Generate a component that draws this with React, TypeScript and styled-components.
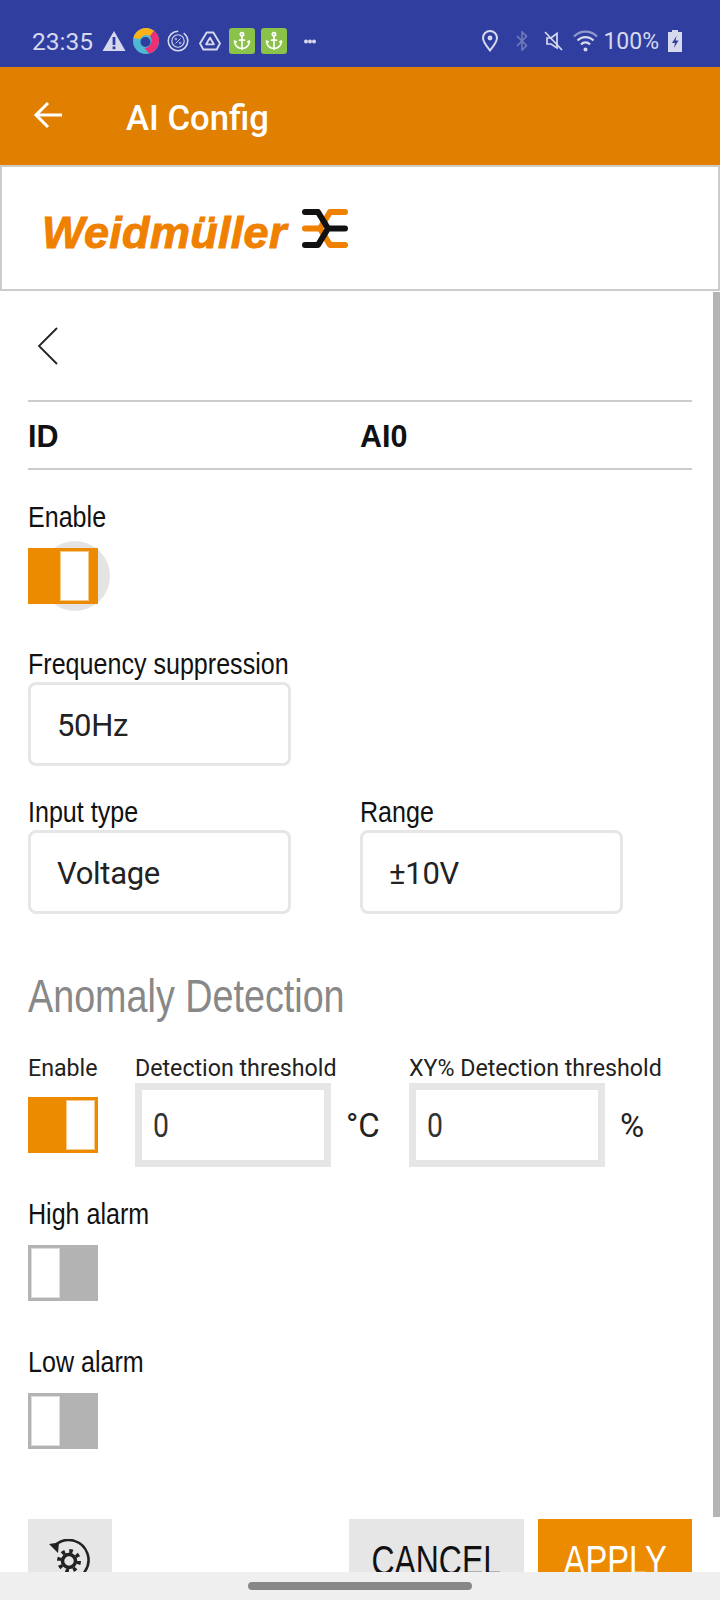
import styled, { createGlobalStyle } from 'styled-components';
import { Anchor, Bluetooth } from 'lucide-react';

const GlobalStyle = createGlobalStyle`
    html, body {
        margin: 0;
        padding: 0;
        background: #fff;
    }
    * {
        box-sizing: border-box;
    }
`

const WarningIcon = () => (
    <svg width="24" height="22" viewBox="0 0 24 22">
        <path d="M12 1 L23.5 21 H.5 Z" fill="#d6d9ee" />
        <rect x="10.6" y="7" width="2.8" height="8" fill="#303f9f" />
        <rect x="10.6" y="16.4" width="2.8" height="2.8" fill="#303f9f" />
    </svg>
)

const BallIcon = () => (
    <svg width="26" height="26" viewBox="0 0 26 26">
        <circle cx="13" cy="13" r="13" fill="#4db9d4" />
        <path d="M.4 10 A13 13 0 0 1 21 2.8 L17 8 A7 7 0 0 0 7 11 Z" fill="#fbb117" />
        <path d="M21 2.8 A13 13 0 0 1 16 25.6 L11.5 20 A7.5 7.5 0 0 0 17 8 Z" fill="#ee2f74" />
        <circle cx="12.5" cy="14" r="5" fill="#303f9f" />
    </svg>
)

const PercentIcon = () => (
    <svg width="22" height="22" viewBox="0 0 23 23" fill="none" stroke="#d6d9ee">
        <circle cx="11.5" cy="11.5" r="10.2" strokeWidth="1.6" strokeDasharray="48 6" />
        <circle cx="11.5" cy="11.5" r="6.5" strokeWidth="1.2" />
        <path d="M9 14 L14 9" strokeWidth="1" />
        <circle cx="9.2" cy="9.4" r=".9" strokeWidth=".8" />
        <circle cx="13.8" cy="13.6" r=".9" strokeWidth=".8" />
    </svg>
)

const DriveIcon = () => (
    <svg width="22" height="20" viewBox="0 0 23 21" fill="none" stroke="#d6d9ee" strokeWidth="2" strokeLinejoin="round">
        <path d="M8 1.5 H15 L22 13 L18.5 19.5 H4.5 L1 13 Z" />
        <path d="M11.5 7 L15.5 14 H7.5 Z" />
    </svg>
)

const DotsIcon = () => (
    <svg width="12" height="5" viewBox="0 0 12 5" fill="#d6d9ee">
        <circle cx="2" cy="2.5" r="2" />
        <circle cx="6" cy="2.5" r="2" />
        <circle cx="10" cy="2.5" r="2" />
    </svg>
)

const PinIcon = () => (
    <svg width="16" height="22" viewBox="0 0 16 22" fill="none" stroke="#d6d9ee" strokeWidth="2">
        <path d="M8 20.5 C4 15.5 1 12 1 8 A7 7 0 0 1 15 8 C15 12 12 15.5 8 20.5 Z" />
        <circle cx="8" cy="8" r="2.4" fill="#d6d9ee" stroke="none" />
    </svg>
)

const MuteIcon = () => (
    <svg width="19" height="20" viewBox="0 0 19 20" fill="none" stroke="#d6d9ee" strokeWidth="1.7">
        <path d="M3 7 H7 L13 2.5 V17 L7 13 H3 Z" />
        <path d="M1 1 L18 19" />
    </svg>
)

const WifiIcon = () => (
    <svg width="25" height="22" viewBox="0 0 25 22" fill="none" strokeWidth="2.2">
        <path d="M1 6.5 A16 16 0 0 1 24 6.5" stroke="#8f98cf" />
        <path d="M4.5 10.5 A11 11 0 0 1 20.5 10.5" stroke="#d6d9ee" />
        <path d="M8 14.5 A6 6 0 0 1 17 14.5" stroke="#d6d9ee" />
        <circle cx="12.5" cy="19.5" r="2" fill="#d6d9ee" stroke="none" />
    </svg>
)

const BatteryIcon = () => (
    <svg width="14" height="22" viewBox="0 0 14 22">
        <path d="M4 0 H10 V2 H14 V22 H0 V2 H4 Z" fill="#d6d9ee" />
        <path d="M8.5 6 L4 13 H7 L6 18 L10.5 10.5 H7.5 Z" fill="#303f9f" />
    </svg>
)

const BackArrow = () => (
    <ArrowSvg width="30" height="28" viewBox="0 0 30 28" fill="none" stroke="#fff" strokeWidth="3">
        <path d="M29 14 H3" />
        <path d="M15 2 L3 14 L15 26" />
    </ArrowSvg>
)

const AppLogo = () => (
    <LogoMark width="46" height="42" viewBox="0 0 46 42" fill="none" strokeWidth="6" strokeLinecap="round" strokeLinejoin="round">
        <path d="M43 4 H28 L18 20.5 H3 M18 20.5 L28 37 H43" stroke="#f08000" />
        <path d="M3 4 H16 L26 20.5 H43 M26 20.5 L16 37 H3" stroke="#111" />
    </LogoMark>
)

const ResetIcon = () => (
    <svg width="44" height="44" viewBox="0 0 44 44" fill="none" stroke="#222" strokeWidth="2.6">
        <path d="M8.5 5 A20 20 0 1 1 21 41" />
        <path d="M1 5 L11 3.5 L10 14 Z" fill="#222" stroke="none" />
        <circle cx="21" cy="22" r="6.5" strokeWidth="3.5" />
        <circle cx="21" cy="22" r="10" strokeWidth="4" strokeDasharray="3.5 4.35" />
    </svg>
)

const App = () => {
    return (
        <Screen>
            <GlobalStyle />
            <StatusBar>
                <StatusGroup>
                    <Clock>23:35</Clock>
                    <Slot $gap={9}><WarningIcon /></Slot>
                    <Slot $gap={7}><BallIcon /></Slot>
                    <Slot $gap={8}><PercentIcon /></Slot>
                    <Slot $gap={10}><DriveIcon /></Slot>
                    <AnchorTile $gap={8}><Anchor size={20} color="#fff" strokeWidth={2} /></AnchorTile>
                    <AnchorTile $gap={6}><Anchor size={20} color="#fff" strokeWidth={2} /></AnchorTile>
                    <Slot $gap={17}><DotsIcon /></Slot>
                </StatusGroup>
                <StatusGroup>
                    <Slot $gap={0}><PinIcon /></Slot>
                    <Slot $gap={13}><Bluetooth size={22} color="#6d78bb" strokeWidth={1.8} /></Slot>
                    <Slot $gap={11}><MuteIcon /></Slot>
                    <Slot $gap={10}><WifiIcon /></Slot>
                    <Battery>100%</Battery>
                    <Slot $gap={9}><BatteryIcon /></Slot>
                </StatusGroup>
            </StatusBar>

            <AppBar>
                <BackArrow />
                <AppTitle>AI Config</AppTitle>
            </AppBar>

            <LogoBox>
                <LogoText>Weidmüller</LogoText>
                <AppLogo />
            </LogoBox>

            <Content>
                <BackRow>
                    <svg width="24" height="40" viewBox="0 0 24 40" fill="none" stroke="#222" strokeWidth="1.8">
                        <path d="M21 2 L3 20 L21 38" />
                    </svg>
                </BackRow>
                <IdRow>
                    <IdCell>ID</IdCell>
                    <IdCell>AI0</IdCell>
                </IdRow>

                <EnableLabel>Enable</EnableLabel>
                <Toggle $on $focus><Thumb $on /></Toggle>

                <Label>Frequency suppression</Label>
                <Select>50Hz</Select>

                <SelectRow>
                    <div>
                        <SelectRowLabel>Input type</SelectRowLabel>
                        <Select>Voltage</Select>
                    </div>
                    <div>
                        <SelectRowLabel>Range</SelectRowLabel>
                        <Select>±10V</Select>
                    </div>
                </SelectRow>

                <SectionTitle>Anomaly Detection</SectionTitle>

                <AnomalyRow>
                    <div>
                        <SmallLabel>Enable</SmallLabel>
                        <AnomalyToggle $on><Thumb $on /></AnomalyToggle>
                    </div>
                    <ThresholdCell>
                        <SmallLabel>Detection threshold</SmallLabel>
                        <ThresholdLine>
                            <NumberBox><NumberText>0</NumberText></NumberBox>
                            <Unit>°C</Unit>
                        </ThresholdLine>
                    </ThresholdCell>
                    <ThresholdCell>
                        <SmallLabel>XY% Detection threshold</SmallLabel>
                        <ThresholdLine>
                            <NumberBox><NumberText>0</NumberText></NumberBox>
                            <Unit>%</Unit>
                        </ThresholdLine>
                    </ThresholdCell>
                </AnomalyRow>

                <EnableLabel>High alarm</EnableLabel>
                <Toggle><Thumb /></Toggle>

                <LowLabel>Low alarm</LowLabel>
                <Toggle><Thumb /></Toggle>

                <ActionRow>
                    <ResetButton><ResetIcon /></ResetButton>
                    <ActionRight>
                        <ActionButton><ActionText>CANCEL</ActionText></ActionButton>
                        <ActionButton $primary><ActionText $primary>APPLY</ActionText></ActionButton>
                    </ActionRight>
                </ActionRow>

                <ScrollThumb />
            </Content>

            <NavBar><NavPill /></NavBar>
        </Screen>
    );
};

export default App;

const Screen = styled.div`
    isolation: isolate;
    width: 720px;
    height: 1600px;
    display: flex;
    flex-direction: column;
    overflow: hidden;
    background: #fff;
    font-family: Roboto, "Liberation Sans", sans-serif;
`

const StatusBar = styled.div`
    flex: none;
    height: 67px;
    background: #303f9f;
    display: flex;
    align-items: center;
    justify-content: space-between;
    padding: 15px 38px 0 32px;
    color: #d6d9ee;
`

const StatusGroup = styled.div`
    display: flex;
    align-items: center;
`

const Slot = styled.div<{ $gap: number }>`
    display: flex;
    margin-left: ${p => p.$gap}px;
`

const Clock = styled.span`
    font-size: 24.5px;
`

const Battery = styled.span`
    font-size: 23px;
    margin-left: 5px;
`

const AnchorTile = styled(Slot)`
    width: 26px;
    height: 26px;
    border-radius: 3px;
    background: #8bc34a;
    align-items: center;
    justify-content: center;
`

const AppBar = styled.div`
    flex: none;
    height: 98px;
    background: #e18000;
    display: flex;
    align-items: center;
    padding: 0 0 0 33px;
    gap: 63px;
`

const ArrowSvg = styled.svg`
    margin-bottom: 3px;
`

const AppTitle = styled.div`
    color: #fff;
    font-size: 34.7px;
    font-weight: 500;
    margin-top: 3px;
`

const LogoBox = styled.div`
    flex: none;
    height: 126px;
    border: 2px solid #ccc;
    display: flex;
    align-items: flex-start;
    padding: 41px 0 0 40px;
    gap: 15px;
    background: #fff;
`

const LogoText = styled.div`
    color: #f08000;
    font-family: "Liberation Sans", Arial, sans-serif;
    font-style: italic;
    font-weight: 700;
    font-size: 45px;
    line-height: 50px;
    letter-spacing: .3px;
    -webkit-text-stroke: 1px #f08000;
`

const LogoMark = styled.svg`
    flex: none;
`

const Content = styled.div`
    position: relative;
    flex: 1;
    min-height: 0;
    padding: 0 28px;
    overflow: hidden;
`

const ScrollThumb = styled.div`
    position: absolute;
    top: 1px;
    right: 0;
    width: 7px;
    height: 1225px;
    background: #b5b5b5;
`

const BackRow = styled.div`
    height: 111px;
    display: flex;
    align-items: center;
    padding-left: 8px;
    border-bottom: 2px solid #ccc;
`

const IdRow = styled.div`
    height: 68px;
    display: grid;
    grid-template-columns: 332px 1fr;
    align-items: center;
    padding-top: 2px;
    border-bottom: 2px solid #ccc;
`

const IdCell = styled.div`
    font-family: "Liberation Sans", Arial, sans-serif;
    font-weight: 700;
    font-size: 30.5px;
    color: #111;
`

const Label = styled.div`
    font-family: "Liberation Sans", Arial, sans-serif;
    font-size: 29.5px;
    line-height: 36px;
    color: #111;
    white-space: nowrap;
    margin-top: 42px;
    transform: scaleX(.85);
    transform-origin: left center;
`

const EnableLabel = styled(Label)`
    margin-top: 29px;
`

const LowLabel = styled(Label)`
    margin-top: 43px;
`

const SelectRowLabel = styled(Label)`
    margin-top: 28px;
`

const SmallLabel = styled.div`
    font-size: 23.2px;
    line-height: 28px;
    color: #222;
`

const Toggle = styled.div<{ $on?: boolean; $focus?: boolean }>`
    position: relative;
    width: 70px;
    height: 56px;
    margin-top: 13px;
    padding: 3px;
    display: flex;
    justify-content: ${p => (p.$on ? 'flex-end' : 'flex-start')};
    background: ${p => (p.$on ? '#ec8b00' : '#b3b3b3')};
    ${p => p.$focus && `
        justify-content: flex-start;
        padding-left: 32px;
        &::before {
            content: '';
            position: absolute;
            z-index: -1;
            left: 12px;
            top: -7px;
            width: 70px;
            height: 70px;
            border-radius: 50%;
            background: #e4e4e4;
        }
    `}
`

const AnomalyToggle = styled(Toggle)`
    margin-top: 15px;
`

const Thumb = styled.div<{ $on?: boolean }>`
    width: 29px;
    height: 50px;
    background: #fff;
    border: 1px solid ${p => (p.$on ? '#f6c88a' : '#ddd')};
`

const SelectRow = styled.div`
    display: grid;
    grid-template-columns: 332px 1fr;
`

const Select = styled.div`
    width: 263px;
    height: 84px;
    border: 3px solid #e6e6e6;
    border-radius: 8px;
    padding: 2px 0 0 26px;
    display: flex;
    align-items: center;
    font-size: 31px;
    letter-spacing: -.3px;
    color: #222;
`

const SectionTitle = styled.div`
    font-family: "Liberation Sans", Arial, sans-serif;
    font-size: 46px;
    line-height: 50px;
    color: #888;
    white-space: nowrap;
    margin-top: 57px;
    transform: scaleX(.82);
    transform-origin: left center;
`

const AnomalyRow = styled.div`
    display: grid;
    grid-template-columns: 107px 274px 1fr;
    margin-top: 33px;
`

const ThresholdCell = styled.div`
    min-width: 0;
    white-space: nowrap;
`

const ThresholdLine = styled.div`
    display: flex;
    align-items: center;
    margin-top: 1px;
`

const NumberBox = styled.div`
    width: 196px;
    height: 84px;
    border: 7px solid #e6e6e6;
    padding-left: 11px;
    display: flex;
    align-items: center;
`

const NumberText = styled.span`
    font-size: 33px;
    color: #333;
    transform: scaleX(.86);
    transform-origin: left center;
`

const Unit = styled.span`
    margin-left: 15px;
    font-size: 33px;
    color: #222;
`

const ActionRow = styled.div`
    display: flex;
    justify-content: space-between;
    margin-top: 70px;
`

const ActionRight = styled.div`
    display: flex;
    gap: 14px;
`

const ResetButton = styled.div`
    width: 84px;
    height: 84px;
    background: #e6e6e6;
    display: flex;
    justify-content: center;
    padding-top: 20px;
`

const ActionButton = styled.div<{ $primary?: boolean }>`
    width: ${p => (p.$primary ? '154px' : '175px')};
    height: 84px;
    display: flex;
    align-items: center;
    justify-content: center;
    background: ${p => (p.$primary ? '#ec8b00' : '#e6e6e6')};
`

const ActionText = styled.span<{ $primary?: boolean }>`
    font-family: "Liberation Sans", Arial, sans-serif;
    font-size: 42px;
    color: ${p => (p.$primary ? '#fff' : '#111')};
    transform: scaleX(${p => (p.$primary ? '.78' : '.76')});
`

const NavBar = styled.div`
    flex: none;
    height: 28px;
    background: #efefef;
    display: flex;
    justify-content: center;
    padding-top: 10px;
`

const NavPill = styled.div`
    width: 224px;
    height: 8px;
    border-radius: 4px;
    background: #888;
`
